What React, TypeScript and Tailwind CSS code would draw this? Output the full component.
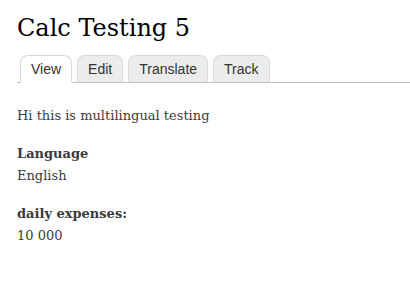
import React from "react";

const tabs = [
  { label: "View", active: true },
  { label: "Edit" },
  { label: "Translate" },
  { label: "Track" },
];

const serif = "font-['DejaVu_Serif',Georgia,serif]";

export default function App() {
  return (
    <div className="min-h-screen w-[410px] bg-white pl-[17px] text-[#3b3b3b]">
      <h1 className={`${serif} pt-[12px] text-[24px] leading-[32px] text-black`}>Calc Testing 5</h1>

      {/* tabs */}
      <ul className="mt-[11px] flex gap-[5px] border-b border-[#bbbbbb] pl-[3px] font-['Liberation_Sans',Arial,sans-serif] text-[14px]">
        {tabs.map((t) => (
          <li
            key={t.label}
            className={`-mb-px h-[28px] rounded-t-[8px] border border-[#d9d9d9] px-[10px] leading-[26px] text-[#333] ${
              t.active ? "border-b-white bg-white" : "border-b-[#bbbbbb] bg-[#ececec]"
            }`}
          >
            {t.label}
          </li>
        ))}
      </ul>

      <div className={`${serif} text-[13px] leading-[22px]`}>
        <p className="mt-[22px]">Hi this is multilingual testing</p>
        <div className="mt-[16px]">
          <div className="font-bold">Language</div>
          <div>English</div>
        </div>
        <div className="mt-[16px]">
          <div className="font-bold">daily expenses:</div>
          <div>10 000</div>
        </div>
      </div>
    </div>
  );
}
